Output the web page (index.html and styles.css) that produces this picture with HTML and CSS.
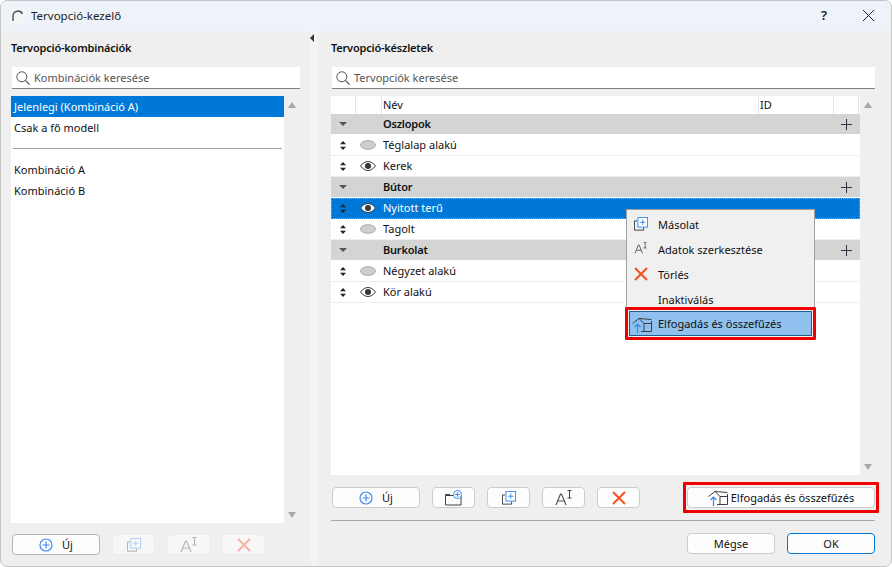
FILE: index.html
```html
<!DOCTYPE html>
<html lang="hu">
<head>
<meta charset="utf-8">
<title>Tervopció-kezelő</title>
<link rel="stylesheet" href="styles.css">
</head>
<body>
<svg class="defs" width="0" height="0" aria-hidden="true">
  <defs>
    <symbol id="i-plus-circle" viewBox="0 0 14 14"><circle cx="7" cy="7" r="6" fill="none" stroke="#3d8bf0" stroke-width="1.2"/><path d="M3.500 7h7M7 3.500v7" stroke="#3d8bf0" stroke-width="1.2"/></symbol>
    <symbol id="i-copy" viewBox="0 0 16 16"><path d="M3.500 4.500H.5v10.500h10.500v-3" fill="none" stroke="#3a3f44" stroke-width="1.100"/><rect x="4.500" y=".5" width="11" height="11" fill="#fff" stroke="#3d8bf0" stroke-width="1.100"/><path d="M7 6h6M10 3v6" stroke="#3d8bf0" stroke-width="1.100"/></symbol>
    <symbol id="i-text" viewBox="0 0 18 16"><path d="M1 15 5.500 4h1L11 15M3 11h6" fill="none" stroke="#555" stroke-width="1.200"/><path d="M12.500.5h4M12.500 8h4M14.500.5V8" fill="none" stroke="#444" stroke-width="1"/></symbol>
    <symbol id="i-x" viewBox="0 0 14 14"><path d="M1 1l12 12M13 1 1 13" stroke="#f4511e" stroke-width="2"/></symbol>
    <symbol id="i-merge" viewBox="0 0 20 16"><path d="M.5 6.500 7 1.500 19.500 2.500M7 1.500 12 6.500V14.500H19.500V4" fill="none" stroke="#3a3f44" stroke-width="1"/><path d="M12 14.500H9M12 6.500h7.500" fill="none" stroke="#3a3f44" stroke-width="1"/><path d="M5.500 16V7M2.500 10l3-3 3 3" fill="none" stroke="#2f8cf0" stroke-width="1.200"/></symbol>
    <symbol id="i-eye" viewBox="0 0 16 10"><path d="M.5 5C3 1.800 5.500.5 8 .5s5 1.300 7.500 4.500C13 8.200 10.500 9.500 8 9.500S3 8.200.5 5z" fill="#fff" stroke="#33383d"/><circle cx="8" cy="5" r="3" fill="#33383d"/></symbol>
    <symbol id="i-eye-off" viewBox="0 0 16 10"><ellipse cx="8" cy="5" rx="7.500" ry="4.300" fill="#cfcfcf" stroke="#a8a8a8"/></symbol>
    <symbol id="i-sort" viewBox="0 0 6 9"><path d="M3 0 6 3.300H0zM3 9 0 5.700h6z" fill="#222"/></symbol>
    <symbol id="i-down" viewBox="0 0 8 4"><path d="M0 0h8L4 4z" fill="#555"/></symbol>
    <symbol id="i-add" viewBox="0 0 11 11"><path d="M0 5.500h11M5.500 0v11" stroke="#2d3640" stroke-width="1"/></symbol>
    <symbol id="i-search" viewBox="0 0 14 14"><circle cx="5.800" cy="5.800" r="5" fill="none" stroke="#555" stroke-width="1"/><path d="M9.500 9.500l4 4" stroke="#555" stroke-width="1.100"/></symbol>
    <symbol id="i-folder" viewBox="0 0 18 16"><path d="M.5 5.500h15.500V15H.5zM.5 5.500V4.500H5" fill="none" stroke="#3a3f44"/><circle cx="12.500" cy="4.500" r="4" fill="#fff" stroke="#3d8bf0"/><path d="M10 4.500h5M12.500 2v5" stroke="#3d8bf0"/></symbol>
  </defs>
</svg>
<div class="window">
  <header class="titlebar">
    <svg class="app-icon" width="14" height="14" viewBox="0 0 14 14"><rect width="14" height="14" fill="#f6f6f6"/><path d="M2 12V7a5 5 0 0 1 9.500-2" fill="none" stroke="#555" stroke-width="1.500"/></svg>
    <span class="title">Tervopció-kezelő</span>
    <span class="help">?</span>
    <svg class="close" width="11" height="11" viewBox="0 0 11 11"><path d="M0 0l11 11M11 0 0 11" stroke="#222" stroke-width="1"/></svg>
  </header>
  <div class="body">
    <section class="pane left">
      <h2>Tervopció-kombinációk</h2>
      <div class="search"><svg width="14" height="14"><use href="#i-search"/></svg><span>Kombinációk keresése</span></div>
      <div class="list-wrap">
        <div class="list">
          <div class="item sel">Jelenlegi (Kombináció A)</div>
          <div class="item">Csak a fő modell</div>
          <div class="sep"></div>
          <div class="item">Kombináció A</div>
          <div class="item">Kombináció B</div>
        </div>
        <div class="scroll"><i class="up"></i><i class="dn"></i></div>
      </div>
      <div class="tools foot">
        <button class="btn wide"><svg width="14" height="14"><use href="#i-plus-circle"/></svg><span>Új</span></button>
        <button class="btn icon off"><svg width="14" height="14"><use href="#i-copy"/></svg></button>
        <button class="btn icon off"><svg width="18" height="16"><use href="#i-text"/></svg></button>
        <button class="btn icon off"><svg width="14" height="14"><use href="#i-x"/></svg></button>
      </div>
    </section>
    <div class="splitter"><i></i></div>
    <section class="pane right">
      <h2>Tervopció-készletek</h2>
      <div class="search"><svg width="14" height="14"><use href="#i-search"/></svg><span>Tervopciók keresése</span></div>
      <div class="list-wrap tall">
        <div class="table">
          <div class="row head"><span class="c1"></span><span class="c2"></span><span class="c3">Név</span><span class="c4">ID</span><span class="c5"></span></div>
          <div class="row group"><span class="c1"><svg width="8" height="4"><use href="#i-down"/></svg></span><span class="c2"></span><span class="c3">Oszlopok</span><span class="c4"></span><span class="c5"><svg width="11" height="11"><use href="#i-add"/></svg></span></div>
          <div class="row"><span class="c1"><svg width="6" height="9"><use href="#i-sort"/></svg></span><span class="c2"><svg width="16" height="10"><use href="#i-eye-off"/></svg></span><span class="c3">Téglalap alakú</span></div>
          <div class="row"><span class="c1"><svg width="6" height="9"><use href="#i-sort"/></svg></span><span class="c2"><svg width="16" height="10"><use href="#i-eye"/></svg></span><span class="c3">Kerek</span></div>
          <div class="row group"><span class="c1"><svg width="8" height="4"><use href="#i-down"/></svg></span><span class="c2"></span><span class="c3">Bútor</span><span class="c4"></span><span class="c5"><svg width="11" height="11"><use href="#i-add"/></svg></span></div>
          <div class="row sel"><span class="c1"><svg width="6" height="9"><use href="#i-sort"/></svg></span><span class="c2"><svg width="16" height="10"><use href="#i-eye"/></svg></span><span class="c3">Nyitott terű</span></div>
          <div class="row"><span class="c1"><svg width="6" height="9"><use href="#i-sort"/></svg></span><span class="c2"><svg width="16" height="10"><use href="#i-eye-off"/></svg></span><span class="c3">Tagolt</span></div>
          <div class="row group"><span class="c1"><svg width="8" height="4"><use href="#i-down"/></svg></span><span class="c2"></span><span class="c3">Burkolat</span><span class="c4"></span><span class="c5"><svg width="11" height="11"><use href="#i-add"/></svg></span></div>
          <div class="row"><span class="c1"><svg width="6" height="9"><use href="#i-sort"/></svg></span><span class="c2"><svg width="16" height="10"><use href="#i-eye-off"/></svg></span><span class="c3">Négyzet alakú</span></div>
          <div class="row"><span class="c1"><svg width="6" height="9"><use href="#i-sort"/></svg></span><span class="c2"><svg width="16" height="10"><use href="#i-eye"/></svg></span><span class="c3">Kör alakú</span></div>
        </div>
        <div class="scroll"><i class="up"></i><i class="dn"></i></div>
      </div>
      <div class="tools">
        <button class="btn wide"><svg width="14" height="14"><use href="#i-plus-circle"/></svg><span>Új</span></button>
        <button class="btn icon"><svg width="18" height="16"><use href="#i-folder"/></svg></button>
        <button class="btn icon"><svg width="14" height="14"><use href="#i-copy"/></svg></button>
        <button class="btn icon"><svg width="18" height="16"><use href="#i-text"/></svg></button>
        <button class="btn icon"><svg width="14" height="14"><use href="#i-x"/></svg></button>
        <button class="btn accept"><svg width="20" height="16"><use href="#i-merge"/></svg><span>Elfogadás és összefűzés</span></button>
      </div>
      <div class="rule"></div>
      <div class="actions">
        <button class="btn wide">Mégse</button>
        <button class="btn wide ok">OK</button>
      </div>
    </section>
  </div>
  <div class="menu">
    <div class="m-item"><svg width="14" height="14"><use href="#i-copy"/></svg><span>Másolat</span></div>
    <div class="m-item"><svg width="14" height="12"><use href="#i-text"/></svg><span>Adatok szerkesztése</span></div>
    <div class="m-item"><svg width="14" height="14"><use href="#i-x"/></svg><span>Törlés</span></div>
    <div class="m-item"><span>Inaktiválás</span></div>
    <div class="m-item hot"><svg width="20" height="16"><use href="#i-merge"/></svg><span>Elfogadás és összefűzés</span></div>
  </div>
</div>
</body>
</html>
```
FILE: styles.css
```css
*, *::after { box-sizing: border-box; }
html, body { margin: 0; padding: 0; background: #fff; }
body { width: 892px; height: 567px; overflow: hidden; font: 11px/14px "Noto Sans", sans-serif; color: #111; }
.defs { display: block; height: 0; }
.window { position: relative; width: 892px; height: 567px; border: 1px solid #c4c4c4; border-radius: 7px; background: #efefef; overflow: hidden; display: flex; flex-direction: column; }
.titlebar { height: 30px; flex: none; background: #eef3f9; display: flex; align-items: center; padding-left: 10px; }
.app-icon { flex: none; margin-bottom: 1px; }
.title { margin-left: 6px; font-size: 11.5px; color: #222; }
.help { margin-left: auto; font-size: 13px; font-weight: 600; color: #222; margin-bottom: 2px; }
.close { margin: 0 17px 2px 36px; }
.body { flex: 1; display: flex; min-height: 0; }
.pane { display: flex; flex-direction: column; }
.pane h2 { margin: 10px 0 12px; font-size: 11px; line-height: 14px; font-weight: 600; letter-spacing: -.2px; color: #111; }
.left { width: 310px; flex: none; padding-left: 10px; }
.right { flex: 1; min-width: 0; padding-left: 14px; }
.splitter { width: 6px; flex: none; background: #f4f4f4; }
.splitter i { display: block; width: 0; height: 0; margin: 3px 0 0 -1px; border: 4px solid transparent; border-left-width: 0; border-right-color: #333; }
.search { margin-left: 1px; width: 288px; height: 22px; flex: none; background: #fff; border-bottom: 1px solid #808080; display: flex; align-items: center; padding-left: 4px; color: #555; }
.search span { margin-left: 4px; }
.right .search { width: 543px; }
.list-wrap { flex: none; height: 427px; margin-top: 7px; display: flex; }
.list-wrap.tall { height: 379px; }
.list { width: 273px; flex: none; background: #fff; }
.item { height: 21px; line-height: 21px; padding-left: 3px; }
.item.sel { background: #0078d7; color: #fff; }
.sep { height: 1px; background: #a0a0a0; margin: 10px 2px; }
.scroll { width: 16px; flex: none; display: flex; flex-direction: column; justify-content: space-between; align-items: center; padding: 6px 0 5px; }
.scroll i { display: block; width: 0; height: 0; border: 4px solid transparent; }
.scroll .up { border-top-width: 0; border-bottom: 6px solid #a8a8a8; }
.scroll .dn { border-bottom-width: 0; border-top: 6px solid #a8a8a8; }
.table { width: 529px; flex: none; background: #fff; }
.row { display: flex; height: 21px; align-items: center; border-bottom: 1px solid #eeeeee; }
.row > span { display: flex; align-items: center; height: 100%; flex: none; }
.c1 { width: 24px; justify-content: center; }
.c2 { width: 26px; justify-content: center; }
.c3 { width: 377px; padding-left: 2px; }
.c4 { width: 75px; padding-left: 2px; }
.c5 { width: 26px; justify-content: center; }
.row.head { height: 18px; border-bottom: 0; }
.row.head > span { border-left: 1px solid #e6e6e6; }
.row.head .c1 { border-left: 0; }
.row.head .c3, .row.head .c4 { padding-left: 1px; }
.row.head .c5 { width: 26px; border-right: 1px solid #e6e6e6; }
.row.group { background: #d4d4d4; border-bottom: 1px solid #fff; font-weight: 600; letter-spacing: -.2px; }
.row.sel { background: #0078d7; color: #fff; border-bottom-color: #0078d7; outline: 1px dotted #e8973a; outline-offset: -1px; }
.tools { display: flex; gap: 12px; margin: 12px 0 0 1px; height: 21px; flex: none; }
.tools.foot { margin-top: 11px; }
.btn { font: inherit; color: #111; background: #fdfdfd; border: 1px solid #cccccc; border-radius: 4px; height: 21px; padding: 0; display: flex; align-items: center; justify-content: center; flex: none; }
.btn.wide { width: 88px; }
.btn.wide svg + span { margin-left: 9px; }
.btn.icon { width: 43px; }
.btn.off { background: #f7f7f7; border-color: #ececec; }
.btn.off svg { opacity: .4; }
.foot .btn.wide { border-color: #b5b5b5; }
.accept { width: 188px; margin-left: 35px; position: relative; }
.accept span { margin-left: 3px; }
.accept::after { content: ""; position: absolute; left: -5px; top: -6px; width: 196px; height: 31px; border: 3px solid #f00000; border-radius: 1px; }
.rule { height: 1px; background: #a8a8a8; margin-top: 12px; width: 544px; flex: none; }
.actions { display: flex; justify-content: flex-end; gap: 12px; margin-top: 12px; width: 544px; }
.ok { border-color: #0078d7; }
.menu { position: absolute; left: 625px; top: 208px; width: 189px; height: 131px; background: #f0f0f0; border: 1px solid #a0a0a0; padding: 1px 2px; display: flex; flex-direction: column; }
.m-item { height: 25px; flex: none; display: flex; align-items: center; padding: 2px 0 0 29px; position: relative; }
.m-item svg { position: absolute; left: 5px; top: 6px; }
.m-item.hot { width: 183px; padding: 1px 0 0 28px; background: #90c0ed; border: 1px solid #1c5f96; }
.m-item.hot svg { left: 2px; top: 5px; }
.m-item.hot::after { content: ""; position: absolute; left: -5px; top: -5px; width: 191px; height: 33px; border: 3px solid #f00000; border-radius: 1px; }
```
